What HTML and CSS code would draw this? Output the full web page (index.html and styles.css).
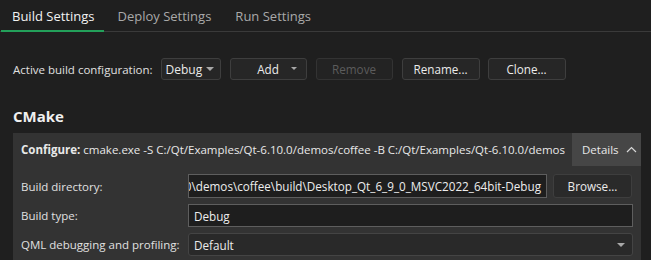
FILE: index.html
```html
<!DOCTYPE html>
<html>
<head>
<meta charset="utf-8">
<link rel="stylesheet" href="styles.css">
</head>
<body>
<div class="tabbar">
  <div class="tab active">Build Settings</div>
  <div class="tab">Deploy Settings</div>
  <div class="tab">Run Settings</div>
</div>
<div class="toolbar">
  <span class="label">Active build configuration:</span>
  <div class="combo combo-debug"><span>Debug</span><span class="arrow"></span></div>
  <div class="btn btn-add"><span class="btn-text">Add</span><span class="arrow"></span></div>
  <div class="btn btn-remove disabled">Remove</div>
  <div class="btn btn-rename">Rename...</div>
  <div class="btn btn-clone">Clone...</div>
</div>
<h2 class="heading">CMake</h2>
<div class="panel">
  <div class="configure">
    <div class="configure-text"><b>Configure:</b> cmake.exe -S C:/Qt/Examples/Qt-6.10.0/demos/coffee -B C:/Qt/Examples/Qt-6.10.0/demos/coffee/build/Desktop_Qt_6_9_0_MSVC2022_64bit-Debug</div>
    <div class="details">Details <svg class="chev" width="11" height="7" viewBox="0 0 11 7"><path d="M1 6 L5.5 1.5 L10 6" fill="none" stroke="#d8d8d8" stroke-width="1.2"/></svg></div>
  </div>
  <div class="form">
    <div class="flabel">Build directory:</div>
    <div class="frow">
      <div class="input input-dir"><span>C:\Qt\Examples\Qt-6.10.0\demos\coffee\build\Desktop_Qt_6_9_0_MSVC2022_64bit-Debug</span></div>
      <div class="btn btn-browse">Browse...</div>
    </div>
    <div class="flabel">Build type:</div>
    <div class="frow"><div class="input input-type"><span>Debug</span></div></div>
    <div class="flabel">QML debugging and profiling:</div>
    <div class="frow"><div class="combo combo-qml"><span>Default</span><span class="arrow"></span></div></div>
  </div>
</div>
</body>
</html>
```
FILE: styles.css
```css
html, body {
  margin: 0;
  padding: 0;
  background: #1f1f1f;
  width: 651px;
  height: 260px;
  overflow: hidden;
  font-family: "Open Sans", "Noto Sans", sans-serif;
  font-size: 11.5px;
  color: #dcdcdc;
}
.tabbar {
  display: flex;
  height: 31px;
  border-bottom: 1px solid #3a3a3a;
  padding-left: 1px;
}
.tab {
  display: flex;
  align-items: center;
  padding: 0 11px 0 11px;
  margin-right: 2px;
  font-size: 13px;
  color: #a9a9a9;
  height: 31px;
  box-sizing: border-box;
  padding-top: 1px;
}
.tab.active {
  color: #f2f2f2;
  border-bottom: 2px solid #23a05a;
  margin-bottom: -1px;
  height: 32px;
  padding-right: 10px;
}
.toolbar {
  display: flex;
  align-items: center;
  margin-top: 26px;
  padding-left: 13px;
  height: 22px;
}
.label {
  margin-right: 8px;
  color: #e0e0e0;
}
.combo, .btn {
  box-sizing: border-box;
  height: 22px;
  border: 1px solid #3e3e3e;
  border-radius: 3px;
  background: #262626;
  display: flex;
  align-items: center;
  color: #ebebeb;
}
.arrow {
  width: 0;
  height: 0;
  border-left: 4px solid transparent;
  border-right: 4px solid transparent;
  border-top: 4px solid #a8a8a8;
}
.combo-debug {
  width: 60px;
  padding: 0 6px 0 4px;
  justify-content: space-between;
  margin-right: 9px;
  font-size: 12px;
}
.btn {
  justify-content: center;
  font-size: 11.7px;
}
.btn-add {
  width: 77px;
  margin-right: 9px;
  position: relative;
}
.btn-add .arrow {
  position: absolute;
  right: 9px;
  top: 8px;
  border-left-width: 3.5px;
  border-right-width: 3.5px;
  border-top-width: 3.5px;
}
.btn-remove {
  width: 77px;
  margin-right: 9px;
}
.btn.disabled {
  color: #5c5c5c;
  border-color: #333333;
  background: #232323;
}
.btn-rename {
  width: 78px;
  margin-right: 8px;
}
.btn-clone {
  width: 78px;
}
.heading {
  margin: 0;
  padding-left: 13px;
  margin-top: 24px;
  font-size: 15px;
  font-weight: 700;
  color: #f0f0f0;
  height: 29px;
  line-height: 24px;
}
.panel {
  margin-left: 13px;
  width: 628px;
  background: #333333;
  height: 127px;
}
.configure {
  display: flex;
  height: 33px;
}
.configure-text {
  flex: 1;
  overflow: hidden;
  white-space: nowrap;
  padding-left: 8px;
  line-height: 33px;
  color: #e8e8e8;
  margin-right: 7px;
}
.configure-text b {
  font-weight: 700;
}
.details {
  width: 69px;
  background: #464646;
  display: flex;
  align-items: center;
  padding-left: 10px;
  box-sizing: border-box;
  color: #e8e8e8;
}
.chev {
  margin-left: 7px;
}
.form {
  display: grid;
  grid-template-columns: 167px 1fr;
  row-gap: 6px;
  padding: 8px 8px 0 8px;
  align-items: center;
}
.flabel {
  color: #e0e0e0;
}
.frow {
  display: flex;
  align-items: center;
}
.input {
  box-sizing: border-box;
  border: 1px solid #5e5e5e;
  background: #1e1e1e;
  display: flex;
  align-items: center;
  overflow: hidden;
  white-space: nowrap;
  color: #ededed;
  font-size: 11.7px;
}
.input-dir {
  width: 359px;
  height: 24px;
  justify-content: flex-end;
  padding-right: 5px;
  margin-right: 6px;
}
.input-dir span {
  flex-shrink: 0;
}
.btn-browse {
  width: 79px;
  height: 24px;
  background: #2a2a2a;
}
.input-type {
  width: 445px;
  height: 23px;
  padding-left: 5px;
}
.combo-qml {
  width: 445px;
  height: 23px;
  justify-content: space-between;
  padding: 0 7px 0 5px;
  background: #292929;
  border-color: #444444;
  font-size: 11.7px;
}
```
